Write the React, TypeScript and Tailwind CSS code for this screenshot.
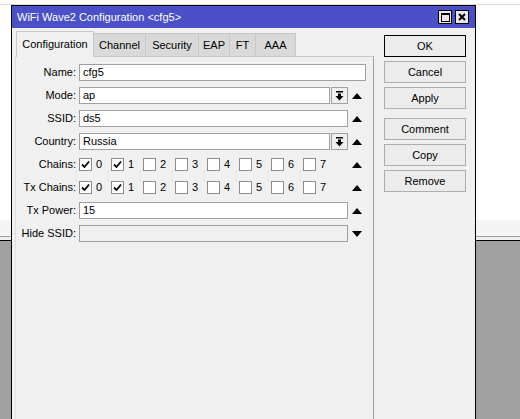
import React from 'react'

const font = { fontFamily: '"Liberation Sans", Arial, sans-serif' }

function UpArrow() {
  return (
    <svg width="10" height="6" viewBox="0 0 10 6">
      <polygon points="0,6 10,6 5,0" fill="#000" />
    </svg>
  )
}

function DownArrow() {
  return (
    <svg width="10" height="6" viewBox="0 0 10 6">
      <polygon points="0,0 10,0 5,6" fill="#000" />
    </svg>
  )
}

function DropButton() {
  return (
    <div className="ml-px flex h-full w-[17px] items-center justify-center border border-[#a0a0a0] bg-[#f0f0f0]">
      <svg width="9" height="10" viewBox="0 0 9 10">
        <rect x="1" y="0" width="7" height="1.5" fill="#000" />
        <rect x="3" y="2.5" width="3" height="3" fill="#000" />
        <polygon points="0.5,5 8.5,5 4.5,9.5" fill="#000" />
      </svg>
    </div>
  )
}

function Field({ value, disabled }: { value?: string; disabled?: boolean }) {
  return (
    <div
      className={`flex h-full flex-1 items-center border border-[#a0a0a0] pl-[3px] text-[11px] text-black ${
        disabled ? 'bg-[#f0f0f0]' : 'bg-white'
      }`}
    >
      {value}
    </div>
  )
}

function Row({ label, children }: { label: string; children: React.ReactNode }) {
  return (
    <div className="flex h-[17px] items-center">
      <div className="w-[60px] text-right text-[11px] text-black">{label}</div>
      <div className="ml-[3px] flex h-full w-[287px] items-center">{children}</div>
    </div>
  )
}

function ArrowSlot({ down }: { down?: boolean }) {
  return <div className="flex w-[18px] items-center justify-center">{down ? <DownArrow /> : <UpArrow />}</div>
}

function Checkbox({ checked }: { checked: boolean }) {
  return (
    <div className="flex h-[13px] w-[13px] items-center justify-center border border-[#8c8c8c] bg-white">
      {checked && (
        <svg width="9" height="9" viewBox="0 0 9 9">
          <path d="M1 4.5 L3.5 7 L8 1.5" stroke="#000" strokeWidth="1.8" fill="none" />
        </svg>
      )}
    </div>
  )
}

function Chains({ checked }: { checked: number[] }) {
  return (
    <>
      <div className="flex flex-1 items-center">
        {[0, 1, 2, 3, 4, 5, 6, 7].map((n) => (
          <div key={n} className="flex w-[32px] items-center gap-[4px] text-[11px]">
            <Checkbox checked={checked.includes(n)} />
            <span>{n}</span>
          </div>
        ))}
      </div>
      <ArrowSlot />
    </>
  )
}

const tabs = [
  { name: 'Configuration', w: 'w-[78px]' },
  { name: 'Channel', w: 'w-[52px]' },
  { name: 'Security', w: 'w-[53px]' },
  { name: 'EAP', w: 'w-[31px]' },
  { name: 'FT', w: 'w-[26px]' },
  { name: 'AAA', w: 'w-[40px]' },
]

function Btn({ label, primary }: { label: string; primary?: boolean }) {
  return (
    <div
      className={`flex h-[22px] w-[82px] items-center justify-center border bg-[#ececec] text-[11px] text-black ${
        primary ? 'border-black' : 'border-[#adadad]'
      }`}
    >
      {label}
    </div>
  )
}

export default function App() {
  return (
    <div className="relative h-[419px] w-[520px] overflow-hidden bg-white" style={font}>
      {/* desktop behind the window */}
      <div className="flex h-full flex-col">
        <div className="h-[4px] bg-white" />
        <div className="h-px bg-[#dcdcdc]" />
        <div className="h-[215px] bg-white" />
        <div className="h-[16px] bg-[#f4f4f4]" />
        <div className="h-px bg-[#a0a0a0]" />
        <div className="h-[3px] bg-[#f0f0f0]" />
        <div className="h-px bg-black" />
        <div className="flex-1 bg-[#a0a0a0]" />
      </div>

      {/* dialog window */}
      <div className="absolute left-[11px] top-[5px] flex h-[430px] w-[465px] flex-col border border-black bg-[#f0f0f0]">
        <div className="flex h-[22px] items-center justify-between bg-[#4b50c8] pl-[5px] pr-[6px]">
          <span className="text-[11px] text-white">WiFi Wave2 Configuration &lt;cfg5&gt;</span>
          <div className="flex gap-[3px]">
            <div className="flex h-[14px] w-[14px] items-center justify-center border border-black bg-[#e8e8e8]">
              <div className="h-[9px] w-[9px] border border-black border-t-2" />
            </div>
            <div className="flex h-[14px] w-[14px] items-center justify-center border border-black bg-[#e8e8e8]">
              <svg width="8" height="8" viewBox="0 0 8 8">
                <path d="M1 1 L7 7 M7 1 L1 7" stroke="#000" strokeWidth="2" />
              </svg>
            </div>
          </div>
        </div>

        <div className="flex flex-1">
          <div className="ml-[3px] mt-[3px] flex w-[359px] flex-col">
            <div className="flex h-[25px] items-end pl-px">
              {tabs.map((t, i) =>
                i === 0 ? (
                  <div
                    key={t.name}
                    className={`${t.w} relative z-10 -mb-px flex h-[26px] items-center justify-center border border-b-0 border-[#c8c8c8] bg-[#f0f0f0] text-[11px]`}
                  >
                    {t.name}
                  </div>
                ) : (
                  <div
                    key={t.name}
                    className={`${t.w} flex h-[23px] items-center justify-center border border-b-0 border-l-0 border-[#c8c8c8] bg-[#d9d9d9] text-[11px]`}
                  >
                    {t.name}
                  </div>
                ),
              )}
            </div>
            <div className="flex flex-1 flex-col gap-[6px] border border-b-0 border-l-[#e0e0e0] border-r-[#a0a0a0] border-t-[#c8c8c8] pt-[7px]">
              <Row label="Name:">
                <Field value="cfg5" />
              </Row>
              <Row label="Mode:">
                <Field value="ap" />
                <DropButton />
                <ArrowSlot />
              </Row>
              <Row label="SSID:">
                <Field value="ds5" />
                <ArrowSlot />
              </Row>
              <Row label="Country:">
                <Field value="Russia" />
                <DropButton />
                <ArrowSlot />
              </Row>
              <Row label="Chains:">
                <Chains checked={[0, 1]} />
              </Row>
              <Row label="Tx Chains:">
                <Chains checked={[0, 1]} />
              </Row>
              <Row label="Tx Power:">
                <Field value="15" />
                <ArrowSlot />
              </Row>
              <Row label="Hide SSID:">
                <Field disabled />
                <ArrowSlot down />
              </Row>
            </div>
          </div>

          <div className="ml-[10px] mt-[7px] flex flex-col">
            <Btn label="OK" primary />
            <div className="mt-[4px] flex flex-col gap-[4px]">
              <Btn label="Cancel" />
              <Btn label="Apply" />
            </div>
            <div className="mt-[9px] flex flex-col gap-[4px]">
              <Btn label="Comment" />
              <Btn label="Copy" />
              <Btn label="Remove" />
            </div>
          </div>
        </div>
      </div>
    </div>
  )
}
